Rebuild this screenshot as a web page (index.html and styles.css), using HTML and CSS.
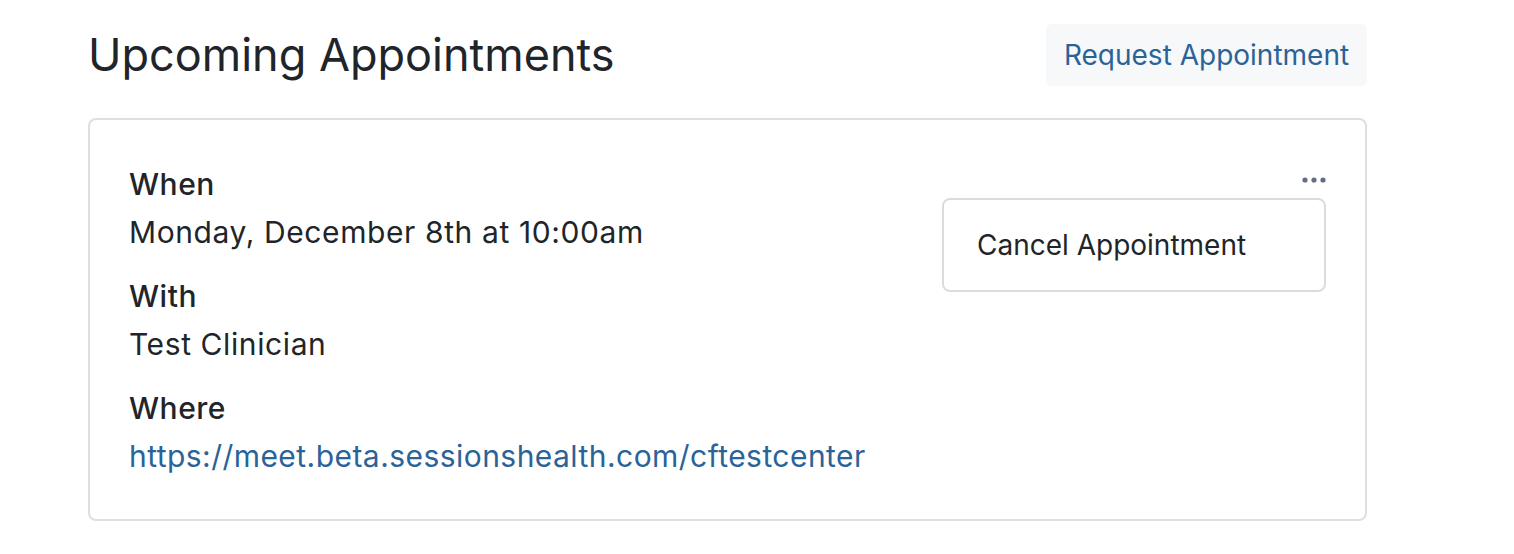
FILE: index.html
```html
<!DOCTYPE html>
<html>
<head>
<meta charset="utf-8">
<link rel="stylesheet" href="styles.css">
</head>
<body>
<main class="page">
  <header class="page-header">
    <h1 class="title">Upcoming Appointments</h1>
    <button class="request-btn">Request Appointment</button>
  </header>
  <section class="card">
    <dl class="details">
      <dt class="label">When</dt>
      <dd class="value">Monday, December 8th at 10:00am</dd>
      <dt class="label">With</dt>
      <dd class="value">Test Clinician</dd>
      <dt class="label">Where</dt>
      <dd class="value"><a class="link" href="#">https://meet.beta.sessionshealth.com/cftestcenter</a></dd>
    </dl>
    <div class="actions">
      <button class="more" aria-label="More">
        <svg width="24" height="6" viewBox="0 0 24 6"><circle cx="3" cy="3" r="2.6" fill="#636d84"/><circle cx="12" cy="3" r="2.6" fill="#636d84"/><circle cx="21" cy="3" r="2.6" fill="#636d84"/></svg>
      </button>
      <div class="menu">
        <div class="menu-item">Cancel Appointment</div>
      </div>
    </div>
  </section>
</main>
</body>
</html>
```

FILE: styles.css
```css
* { box-sizing: border-box; }
html, body { margin: 0; padding: 0; background: #fff; }
body {
  font-family: Inter, "Noto Sans", sans-serif;
  color: #212529;
}
.page {
  width: 1279px;
  margin-left: 88px;
  padding-top: 24px;
}
.page-header {
  display: flex;
  justify-content: space-between;
  align-items: flex-start;
  height: 95px;
}
.title {
  margin: 0;
  font-size: 45px;
  font-weight: 400;
  line-height: 62px;
  color: #212529;
}
.request-btn {
  font-family: inherit;
  font-size: 28px;
  font-weight: 400;
  color: #2a6397;
  background: #f6f8fa;
  border: none;
  border-radius: 6px;
  height: 62px;
  width: 321px;
  padding: 0;
  cursor: pointer;
}
.card {
  border: 2px solid #dedfe1;
  border-radius: 8px;
  height: 403px;
  width: 1279px;
  margin-top: -1px;
  padding: 40px 40px 0 39px;
  display: flex;
  justify-content: space-between;
}
.details { margin: 0; }
.label {
  font-size: 30px;
  font-weight: 500;
  line-height: 48px;
  letter-spacing: 0.5px;
  margin: 0;
}
.value {
  font-size: 30px;
  font-weight: 400;
  line-height: 48px;
  letter-spacing: 0.6px;
  margin: 0 0 16px 0;
}
.link { color: #2a6397; text-decoration: none; letter-spacing: 0.45px; }
.actions {
  display: flex;
  flex-direction: column;
  align-items: flex-end;
  padding-top: 11px;
  margin-right: -1px;
}
.more {
  border: none;
  background: none;
  padding: 0;
  height: 18px;
  display: flex;
  align-items: center;
}
.menu {
  margin-top: 9px;
  width: 384px;
  height: 94px;
  border: 2px solid #dcdcdc;
  border-radius: 8px;
  display: flex;
  align-items: center;
  padding-left: 33px;
  background: #fff;
}
.menu-item {
  font-size: 28px;
  color: #212529;
}
```
